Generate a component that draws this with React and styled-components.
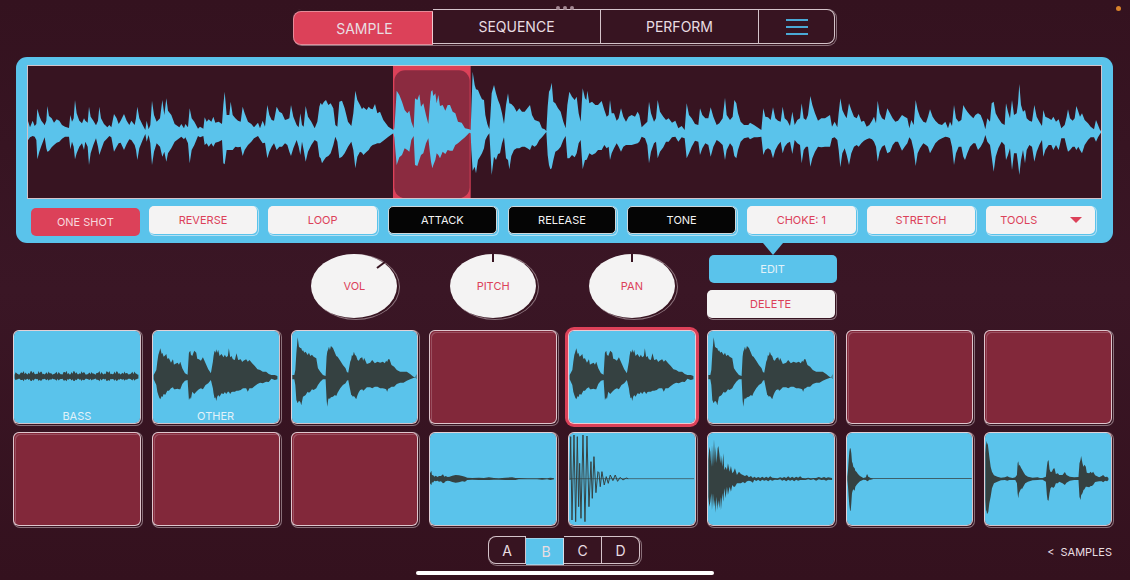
import React, { useState } from 'react';
import styled, { createGlobalStyle, css } from 'styled-components';

const color = {
  bg: '#371421',
  blue: '#5ac3eb',
  red: '#dc4159',
  wine: '#82283a',
  white: '#f4f3f3',
  ink: '#354141',
  line: 'rgba(240, 226, 231, 0.85)',
  faint: 'rgba(240, 226, 231, 0.45)',
};

// each point is "x top bottom", one list per third of the clip
const TRACK = [
  {
    offset: 0,
    points:
      '83 210 272,90 232 262,98 212 258,104 228 260,109 222 270,112 176 328,118 198 305,124 212 288,130 220 272,134 226 262,139 212 295,142 168 305,147 198 303,155 205 292,162 218 285,170 208 278,178 212 275,186 225 266,195 230 260,207 234 260,211 195 298,216 215 275,221 205 290,225 150 328,230 190 310,238 212 290,246 220 280,252 205 300,256 212 275,263 218 290,267 170 345,272 200 310,280 212 285,288 226 265,294 212 290,298 170 315,303 205 300,312 222 275,322 232 265,328 225 258,334 232 262,342 192 305,350 205 290,356 222 280,362 212 278,372 192 300,380 212 282,388 225 268,394 212 270,404 225 285,408 205 300,412 170 330,418 205 295,428 225 270,436 240 252,440 212 275,446 238 255,451 225 280,456 152 345,462 195 305,470 215 280,480 205 290,487 150 320,493 195 305,499 145 335,504 182 310,514 195 295,524 222 275,538 232 265,544 222 260,552 235 268,556 222 262,564 232 280,569 175 340,575 205 300,583 215 285,594 236 258,600 230 262,610 236 258,614 202 285,620 215 280,626 208 290,634 215 280,640 200 290,646 218 278,656 215 275,666 222 270,670 165 340,674 125 343,680 195 300,688 195 300,692 155 300,698 195 300,706 205 290,714 212 292,722 215 290,728 170 318,734 190 300,744 215 285,754 222 275,762 232 265,774 218 258,780 235 268,788 212 280,795 230 278,802 165 325,808 195 305,815 210 290,822 212 280,830 170 300,838 185 290,846 190 290,855 210 280,862 208 285,868 205 305,873 165 318,880 200 295,890 225 270,896 232 290,901 190 315,906 225 275,911 230 300,917 168 335,924 200 305,934 215 285,944 235 270,952 215 275,958 170 320,962 158 325,966 165 340,972 155 330,978 150 322,985 165 318,992 160 310,1000 175 285,1006 225 260,1012 230 275,1018 155 325,1026 152 320,1034 175 310,1044 215 290,1054 228 275,1060 190 300,1066 122 355,1072 150 320,1080 165 305,1086 178 308,1090 172 315,1100 180 305,1106 170 300',
  },
  {
    offset: 1110,
    points:
      '2 176 290,8 178 285,15 162 283,22 190 280,30 185 280,40 210 272,55 230 260,70 240 250,73 235 262,76 190 300,80 122 345,88 135 322,96 155 315,104 180 295,112 190 300,118 182 305,124 215 270,131 235 258,135 145 345,142 150 348,148 133 330,153 170 315,160 160 310,168 195 280,175 222 265,180 155 310,183 125 335,187 120 355,190 138 345,196 130 330,200 160 310,205 135 315,210 168 325,218 165 305,226 182 312,233 165 300,240 165 302,248 185 302,256 190 285,264 215 280,275 218 270,285 235 262,298 238 248,302 240 250,304 180 300,308 65 362,314 105 350,318 118 370,324 120 330,330 135 320,336 148 310,342 150 295,346 195 270,352 222 258,358 238 250,361 200 300,365 130 375,372 105 320,378 130 330,384 150 312,390 165 310,396 190 280,402 222 262,408 165 325,414 130 330,418 160 358,424 162 318,432 170 300,440 185 295,448 175 295,456 185 290,464 185 290,472 175 295,480 165 300,486 195 285,494 210 290,500 212 285,508 215 270,516 235 262,524 238 252,529 243 246,533 170 315,537 125 345,541 118 358,545 98 355,550 155 330,556 160 305,564 175 300,572 185 290,580 215 270,587 235 258,592 165 325,598 125 325,606 140 315,614 150 322,620 140 310,626 190 280,632 215 270,638 115 358,645 145 330,649 150 330,652 122 325,658 160 310,666 155 315,676 165 310,684 165 300,695 153 300,703 180 285,710 200 295,716 195 290,720 150 330,725 190 310,732 190 295,740 212 280,746 205 290,753 175 305,760 200 290,768 215 285,776 200 285,785 195 285,795 200 282,803 185 280,808 195 275,815 232 260,825 222 265,832 215 285,837 155 340,843 190 305,852 215 280,858 205 275,863 150 325,870 185 305,880 200 292,888 210 275,896 205 275,906 218 262,916 212 260,925 235 275,935 228 262,944 240 265,950 160 325,957 195 310,965 205 290,975 222 272,985 225 275,990 175 315,997 195 295,1006 205 280,1015 205 285,1022 172 320,1030 200 290,1040 225 270,1048 220 275,1058 205 285,1065 143 330,1070 195 300,1080 210 280,1088 200 290,1093 150 318,1099 160 325,1104 190 300,1112 215 275,1122 225 265,1135 225 262',
  },
  {
    offset: 2250,
    points:
      '0 218 268,12 225 262,22 232 262,34 240 260,40 175 315,46 200 300,54 202 295,62 210 300,69 172 325,76 205 300,84 212 285,92 215 275,98 170 310,104 205 290,112 212 280,120 228 275,127 185 312,134 225 270,142 210 280,150 205 285,155 160 340,161 205 300,168 210 290,174 195 290,181 138 350,187 165 325,195 190 305,204 212 290,214 205 292,225 205 290,232 200 290,240 195 290,246 230 265,254 215 262,262 232 270,266 190 300,271 145 352,277 180 310,284 195 295,290 205 315,297 160 345,304 180 310,312 200 290,320 205 285,326 192 290,334 215 280,342 212 272,350 230 268,358 225 265,366 212 268,372 200 275,378 220 290,383 152 335,389 190 305,396 205 290,404 210 285,412 175 310,420 190 305,428 205 285,436 215 275,444 212 275,456 195 302,464 200 290,472 205 280,478 235 262,484 210 270,491 225 300,497 150 348,503 180 310,510 200 295,520 215 280,528 218 285,534 200 290,540 178 310,548 200 295,556 212 280,566 222 270,576 225 265,586 215 260,594 235 262,600 215 265,606 228 290,612 165 345,618 205 310,626 215 290,634 210 290,640 165 320,645 175 330,652 185 310,660 195 290,670 205 280,676 195 280,684 190 300,692 195 290,700 215 275,706 238 255,712 205 275,720 215 285,725 160 320,731 155 365,737 190 320,745 205 295,755 220 275,764 225 285,768 160 330,774 185 315,780 205 295,786 150 360,792 195 310,800 190 310,804 160 340,808 102 375,813 165 330,819 185 300,825 180 340,830 205 300,838 212 285,846 215 290,853 165 335,860 200 305,868 215 285,876 228 270,880 180 320,886 200 300,896 205 285,904 210 285,910 200 300,918 215 285,926 208 300,934 235 265,944 225 265,950 200 290,954 178 305,960 205 300,968 212 290,974 205 290,979 168 300,985 185 290,990 200 300,996 190 310,1004 210 285,1014 220 270,1022 230 262,1032 238 262,1038 210 275,1044 225 262,1050 240 252,1055 245 246',
  },
];

const CHORD =
  '462 165 178,470 150 195,473 125 215,476 105 225,479 95 233,482 85 238,486 102 228,488 98 232,492 110 222,497 106 224,500 102 218,503 116 212,508 115 212,514 128 205,520 118 202,523 134 208,526 132 208,534 128 206,538 134 208,542 125 208,548 145 192,556 160 182,564 164 180,566 130 210,568 98 240,572 92 232,574 104 238,578 108 215,584 92 222,590 98 215,593 116 212,598 118 208,604 122 205,610 112 208,618 130 195,626 148 190,634 160 180,640 125 205,642 108 220,645 92 235,648 98 232,650 88 243,653 98 230,656 90 225,660 108 230,666 102 220,672 112 222,676 104 216,680 112 222,685 108 215,688 85 215,692 112 222,696 108 216,700 118 215,706 120 215,711 100 212,716 120 212,724 118 210,728 126 206,732 122 205,740 118 205,745 125 215,750 120 205,758 130 205,766 138 198,774 148 192,782 150 188,790 155 190,800 155 185,808 162 186,816 165 176,826 165 180,834 168 178';

const STAB =
  '446 165 178,452 165 178,455 150 195,458 100 240,462 52 250,466 80 242,470 84 246,473 85 256,476 94 240,478 90 230,482 98 228,486 95 225,492 105 215,496 98 218,500 108 215,505 104 208,510 110 210,518 115 205,523 145 195,530 155 185,538 165 178,546 168 178,549 110 240,551 95 260,554 88 238,556 80 235,559 90 236,562 78 232,568 84 230,574 98 225,578 108 228,582 110 218,590 122 205,598 135 195,606 145 190,610 156 182,614 158 180,620 125 210,623 118 225,625 105 226,628 108 230,631 95 228,634 104 232,638 108 238,642 120 225,646 122 216,650 115 210,656 112 208,659 122 212,662 114 210,670 132 202,680 128 202,686 120 205,694 130 200,702 125 200,710 128 205,718 125 205,724 130 206,728 122 208,731 126 215,734 118 206,738 118 205,744 135 200,752 140 200,760 150 192,770 155 188,780 155 188,790 155 182,800 162 178,810 170 174,816 172 172,819 162 178';

const VOX =
  '453 460 490,457 452 496,459 466 486,462 465 488,466 470 482,470 467 484,476 471 482,480 468 485,486 468 484,492 463 490,496 470 488,500 468 484,506 471 482,512 470 483,520 467 486,530 465 488,540 466 487,550 468 484,558 470 485,565 473 480,580 474 479,600 473 480,615 474 480,630 472 480,645 474 479,660 475 479,680 473 480,700 472 480,710 474 480,720 474 478,745 475 478,775 475 478,790 474 479,805 475 478,815 473 480,826 475 478';

const SNARE =
  '446 420 530,449 380 560,452 395 545,455 440 520,457 375 570,460 440 520,463 358 560,466 430 540,468 380 578,471 430 530,474 385 570,476 378 540,479 400 565,482 430 530,484 405 570,488 440 520,491 400 545,494 450 505,498 440 535,502 450 500,505 430 525,510 455 500,514 438 515,518 460 495,522 455 500,526 445 500,532 465 490,538 455 490,544 462 490,550 465 486,556 468 490,562 465 484,568 472 482,574 468 484,580 474 488,584 470 479,590 474 483,596 471 479,602 474 484,608 470 479,614 474 482,620 470 480,626 474 484,632 469 479,638 473 482,646 474 479,654 475 480,662 472 478,668 474 482,674 471 479,680 474 484,686 469 479,692 474 482,698 470 479,704 474 484,710 470 479,716 473 482,722 469 480,728 474 480,738 475 480,746 473 478,754 475 480,762 474 478,770 474 482,778 471 478,786 474 480,794 471 479,800 474 482,806 472 479,818 474 480';

const HAT =
  '22 470 480,24 450 500,26 420 530,28 395 555,30 384 570,32 386 574,34 400 550,36 425 520,38 430 512,40 440 508,44 445 512,46 452 500,50 456 494,54 462 490,60 468 484,70 474 479,78 472 480,80 464 482,82 463 484,85 470 482,88 472 479,92 474 479,100 475 477,396 475 477';

const BREAK =
  '438 400 540,440 370 575,441 362 570,443 375 582,445 368 580,447 385 575,450 410 550,454 440 530,458 455 505,464 466 490,474 470 485,485 473 481,497 472 480,504 469 482,510 472 480,520 474 480,528 472 480,533 465 490,535 430 520,537 424 535,539 438 520,541 434 515,546 445 505,548 448 508,552 455 500,558 465 490,566 470 485,580 473 481,595 472 480,602 474 479,610 474 479,620 470 485,623 440 525,625 425 540,628 420 542,631 448 520,634 456 505,638 455 500,642 446 504,646 445 500,650 462 490,656 460 490,660 465 485,670 465 490,677 456 495,682 465 488,692 470 482,705 472 480,718 471 480,721 430 530,724 420 540,726 408 526,730 430 520,733 440 510,736 434 508,740 440 500,743 458 500,750 460 502,755 455 498,758 460 498,762 455 495,768 466 486,780 472 484,788 468 484,792 465 487,798 471 482,804 470 484,808 474 480';

const BASS = Array.from({ length: 125 }, (_, i) => {
  const swell = 8 + Math.abs(Math.sin(i * 0.083)) * 5;
  const beat = Math.abs(Math.sin(i * 1.9) * Math.cos(i * 0.37));
  const amp = 4 + swell * beat;
  return `${46 + i * 3} ${168 - amp} ${173 + amp * 0.7}`;
}).join(',');

// the kick is drawn as one swinging line
const KICK =
  'M31 480 33 350 37 600 43 345 48 605 53 350 57 560 60 430 64 595 70 345 76 605 82 348 88 560 94 425 98 535 103 410 109 518 115 455 118 458 122 500 127 455 134 495 140 470 146 490 152 465 160 482 167 465 174 484 182 472 190 480 200 474 206 476';

const PADS = [
  { name: 'BASS', wave: BASS, x: 41, mid: 171 },
  { name: 'OTHER', wave: CHORD, x: 457, mid: 171 },
  { wave: STAB, x: 442, mid: 171 },
  {},
  { wave: CHORD, x: 457, mid: 171 },
  { wave: STAB, x: 442, mid: 171 },
  {},
  {},
  {},
  {},
  {},
  { wave: VOX, x: 450, mid: 477 },
  { line: KICK, x: 25, mid: 477 },
  { wave: SNARE, x: 442, mid: 477 },
  { wave: HAT, x: 18, mid: 477 },
  { wave: BREAK, x: 434, mid: 477 },
];

const parse = (points, offset = 0) =>
  points.split(',').map((point) => {
    const [x, top, bottom] = point.split(' ').map(Number);
    return [x + offset, top, bottom];
  });

const envelope = (rows) => {
  const top = rows.map(([x, t]) => `${x} ${t}`);
  const bottom = rows.map(([x, , b]) => `${x} ${b}`).reverse();
  return `M${top.join(' ')} ${bottom.join(' ')}Z`;
};

const trackPath = envelope(
  TRACK.flatMap(({ points, offset }) => parse(points, offset)),
);

const TrackWave = () => (
  <Wave viewBox="84 48 3219 396" preserveAspectRatio="none" aria-hidden="true">
    <rect x="1179" y="48" width="233" height="396" fill={color.red} />
    <rect x="1183" y="61" width="226" height="383" rx="32" fill="#8b2b40" />
    <path d={trackPath} fill={color.blue} />
  </Wave>
);

const PadWave = ({ pad }) => (
  <Wave
    viewBox={`${pad.x + 3} ${pad.mid - 138} 378 276`}
    preserveAspectRatio="none"
    aria-hidden="true"
  >
    {pad.wave && <path d={envelope(parse(pad.wave))} fill={color.ink} />}
    {pad.line && (
      <g fill="none" stroke={color.ink}>
        <path d={pad.line} strokeWidth="3" />
        <path d="M31 476H404" strokeWidth="2" />
      </g>
    )}
  </Wave>
);

const Dial = ({ label, value, tick }) => (
  <Knob>
    <svg viewBox="0 0 86 64" aria-hidden="true">
      <path d={tick} stroke={color.bg} strokeWidth="2" />
    </svg>
    <span>{label}</span>
    <input type="range" min="0" max="100" defaultValue={value} />
  </Knob>
);

const App = () => {
  const [tab, setTab] = useState('SAMPLE');
  const [bank, setBank] = useState('B');
  const [selected, setSelected] = useState(4);
  const [oneShot, setOneShot] = useState(true);

  return (
    <Page>
      <GlobalStyle />
      <Dots aria-hidden="true">
        <i />
        <i />
        <i />
      </Dots>
      <MicDot />

      <Tabs>
        {[
          ['SAMPLE', 140],
          ['SEQUENCE', 168],
          ['PERFORM', 158],
        ].map(([name, width]) => (
          <Tab
            key={name}
            $width={width}
            $pressed={tab === name}
            $fill={color.red}
            onClick={() => setTab(name)}
          >
            {name}
          </Tab>
        ))}
        <Tab $width={76} aria-label="Menu">
          <svg width="24" height="18" viewBox="0 0 24 18">
            <path
              d="M1 2H23M1 9H23M1 16H23"
              stroke="#4aa9d6"
              strokeWidth="2"
            />
          </svg>
        </Tab>
      </Tabs>

      <Panel>
        <Screen>
          <TrackWave />
        </Screen>
        <ButtonRow>
          <Button
            $tone={oneShot ? 'red' : 'white'}
            $pressed={oneShot}
            onClick={() => setOneShot(!oneShot)}
          >
            ONE SHOT
          </Button>
          <Button $onPanel>REVERSE</Button>
          <Button $onPanel>LOOP</Button>
          <Button $onPanel $tone="black">ATTACK</Button>
          <Button $onPanel $tone="black">RELEASE</Button>
          <Button $onPanel $tone="black">TONE</Button>
          <Button $onPanel>CHOKE: 1</Button>
          <Button $onPanel>STRETCH</Button>
          <Tools>
            <Select aria-label="Tools">
              <option>TOOLS</option>
            </Select>
            <svg width="12" height="6" viewBox="0 0 12 6" aria-hidden="true">
              <path d="M0 0H12L6 6Z" fill={color.red} />
            </svg>
          </Tools>
        </ButtonRow>
      </Panel>

      <Controls>
        <Dial label="VOL" value="70" tick="M66 14 74 8" />
        <Dial label="PITCH" value="50" tick="M43 0V8" />
        <Dial label="PAN" value="50" tick="M43 0V8" />
        <Actions>
          <Button $tone="blue" $pressed $pointer>
            EDIT
          </Button>
          <Button>DELETE</Button>
        </Actions>
      </Controls>

      <PadGrid>
        {PADS.map((pad, i) => (
          <Pad
            key={i}
            $empty={!pad.wave && !pad.line}
            $selected={i === selected}
            aria-label={pad.name || `Pad ${i + 1}`}
            onClick={() => setSelected(i)}
          >
            {(pad.wave || pad.line) && <PadWave pad={pad} />}
            {pad.name && <PadName>{pad.name}</PadName>}
          </Pad>
        ))}
      </PadGrid>

      <Footer>
        <Banks>
          {['A', 'B', 'C', 'D'].map((name) => (
            <Tab
              key={name}
              $width={38}
              $pressed={bank === name}
              $fill={color.blue}
              onClick={() => setBank(name)}
            >
              {name}
            </Tab>
          ))}
        </Banks>
        <SamplesLink href="#samples">
          <span>&lt;</span>
          <span>SAMPLES</span>
        </SamplesLink>
      </Footer>
      <HomeBar />
    </Page>
  );
};

const GlobalStyle = createGlobalStyle`
  * {
    box-sizing: border-box;
  }

  body {
    margin: 0;
    background: ${color.bg};
  }

  button, select, input {
    font: inherit;
    color: inherit;
  }
`;

const Page = styled.div`
  position: relative;
  min-height: 100vh;
  padding-top: 9px;
  display: flex;
  flex-direction: column;
  background: linear-gradient(#34121f, #3a1625 50%, #34111e);
  font-family: Inter, 'Liberation Sans', sans-serif;
  font-size: 11px;
  color: #e9dde1;
`;

const Dots = styled.div`
  position: absolute;
  top: 6px;
  left: 50%;
  display: flex;
  gap: 3px;
  transform: translateX(-50%);

  i {
    width: 4px;
    height: 4px;
    border-radius: 50%;
    background: #a38893;
  }
`;

const MicDot = styled.div`
  position: absolute;
  top: 6px;
  right: 9px;
  width: 5px;
  height: 5px;
  border-radius: 50%;
  background: #d9822b;
`;

const Tabs = styled.nav`
  display: flex;
  align-self: center;
  height: 35px;
  margin-right: 2px;
  border-radius: 8px;
  font-size: 14px;
  box-shadow: 1px 1px 0 ${color.bg}, 1px 1px 0 1px ${color.faint};
`;

const Banks = styled(Tabs)`
  grid-column: 2;
  height: 28px;
`;

const Tab = styled.button`
  display: flex;
  align-items: center;
  justify-content: center;
  width: ${({ $width }) => $width}px;
  padding: 0;
  border: 1px solid ${color.line};
  border-left-width: 0;
  background: ${color.bg};
  cursor: pointer;

  &:first-child {
    border-left-width: 1px;
    border-radius: 8px 0 0 8px;
  }

  &:last-child {
    border-radius: 0 8px 8px 0;
  }

  ${({ $pressed, $fill }) =>
    $pressed &&
    css`
      margin: 2px 0 -1px;
      padding-left: 3px;
      border-color: ${color.faint};
      border-right-color: ${color.line};
      background: ${$fill};
    `}
`;

const Panel = styled.section`
  margin: 13px 17px 0 16px;
  padding: 8px 11px 9px;
  border-radius: 11px;
  background: ${color.blue};
`;

const Screen = styled.div`
  height: 134px;
  border: 1px solid #d3c3ca;
  background: ${color.bg};
`;

const Wave = styled.svg`
  display: block;
  width: 100%;
  height: 100%;
`;

const ButtonRow = styled.div`
  display: grid;
  grid-template-columns: repeat(9, 1fr);
  gap: 11px;
  padding: 7px 7px 0 2px;
`;

const tones = {
  white: css`
    background: ${color.white};
    color: ${color.red};
  `,
  black: css`
    border: 1px solid #cfd9dd;
    background: #050505;
    color: ${color.white};
  `,
  red: css`
    background: ${color.red};
    color: #f8d9de;
  `,
  blue: css`
    background: ${color.blue};
    color: #e2f2f9;
  `,
};

const face = css`
  height: 28px;
  padding: 0;
  border: 0;
  border-radius: 5px;
  cursor: pointer;
  box-shadow: ${({ $onPanel }) =>
    $onPanel
      ? `1px 1px 0 ${color.blue}, 1px 1px 0 1px #b4e0f3`
      : `1px 1px 0 ${color.bg}, 1px 1px 0 1px ${color.faint}`};
  ${({ $tone = 'white' }) => tones[$tone]}
`;

const Button = styled.button`
  ${face}

  ${({ $pressed }) =>
    $pressed &&
    css`
      position: relative;
      transform: translate(2px, 2px);
      box-shadow: none;
    `}

  ${({ $pointer }) =>
    $pointer &&
    css`
      &::after {
        content: '';
        position: absolute;
        bottom: 100%;
        left: 50%;
        border: 10px solid transparent;
        border-top: 12px solid ${color.blue};
        border-bottom: 0;
        transform: translateX(-50%);
      }
    `}
`;

const Tools = styled.div`
  display: grid;
  align-items: center;

  > * {
    grid-area: 1 / 1;
  }

  svg {
    justify-self: end;
    margin-right: 13px;
    pointer-events: none;
  }
`;

const Select = styled.select.attrs({ $onPanel: true })`
  ${face}
  width: 100%;
  padding-left: 14px;
  appearance: none;
`;

const padColumns = css`
  display: grid;
  grid-template-columns: repeat(8, 1fr);
  column-gap: 11px;
  padding: 0 18px 0 13px;
`;

const Controls = styled.section`
  ${padColumns}
  align-items: end;
  margin-top: 10px;
`;

const Knob = styled.label`
  display: grid;
  place-items: center;
  justify-self: center;
  width: 86px;
  height: 64px;
  border-radius: 50%;
  background: ${color.white};
  color: ${color.red};
  box-shadow: 2px 1px 0 ${color.bg}, 2px 1px 0 1px ${color.faint};

  &:first-child {
    grid-column-start: 3;
  }

  > * {
    grid-area: 1 / 1;
  }

  svg {
    width: 100%;
    height: 100%;
  }

  input {
    width: 100%;
    height: 100%;
    margin: 0;
    opacity: 0;
    cursor: pointer;
  }
`;

const Actions = styled.div`
  display: flex;
  flex-direction: column;
  gap: 9px;
`;

const PadGrid = styled.section`
  ${padColumns}
  row-gap: 8px;
  margin-top: 12px;
`;

const Pad = styled.button`
  position: relative;
  height: 94px;
  padding: 0;
  border: 1px solid ${color.line};
  border-radius: 6px;
  overflow: hidden;
  background: ${color.blue};
  background-clip: padding-box;
  box-shadow: 1px 1px 0 ${color.bg}, 1px 1px 0 1px ${color.faint};
  cursor: pointer;

  ${({ $empty }) =>
    $empty &&
    css`
      background: ${color.wine};
      box-shadow: 1px 1px 0 ${color.bg}, 1px 1px 0 1px ${color.faint},
        inset 1px 1px 0 ${color.wine}, inset 2px 2px 0 #9a5060;
    `}

  ${({ $selected }) =>
    $selected &&
    css`
      box-shadow: 0 0 0 3px ${color.red};
    `}
`;

const PadName = styled.span`
  position: absolute;
  inset: auto 0 0;
  line-height: 14px;
  color: #e2f2f9;
`;

const Footer = styled.footer`
  display: grid;
  grid-template-columns: 1fr auto 1fr;
  align-items: center;
  margin-top: 10px;
  padding: 0 18px;
`;

const SamplesLink = styled.a`
  display: flex;
  gap: 6px;
  justify-self: end;
  padding-top: 3px;
  color: inherit;
  text-decoration: none;
`;

const HomeBar = styled.div`
  align-self: center;
  width: 298px;
  height: 4px;
  margin-top: 7px;
  border-radius: 2px;
  background: #fff;
`;

export default App;
